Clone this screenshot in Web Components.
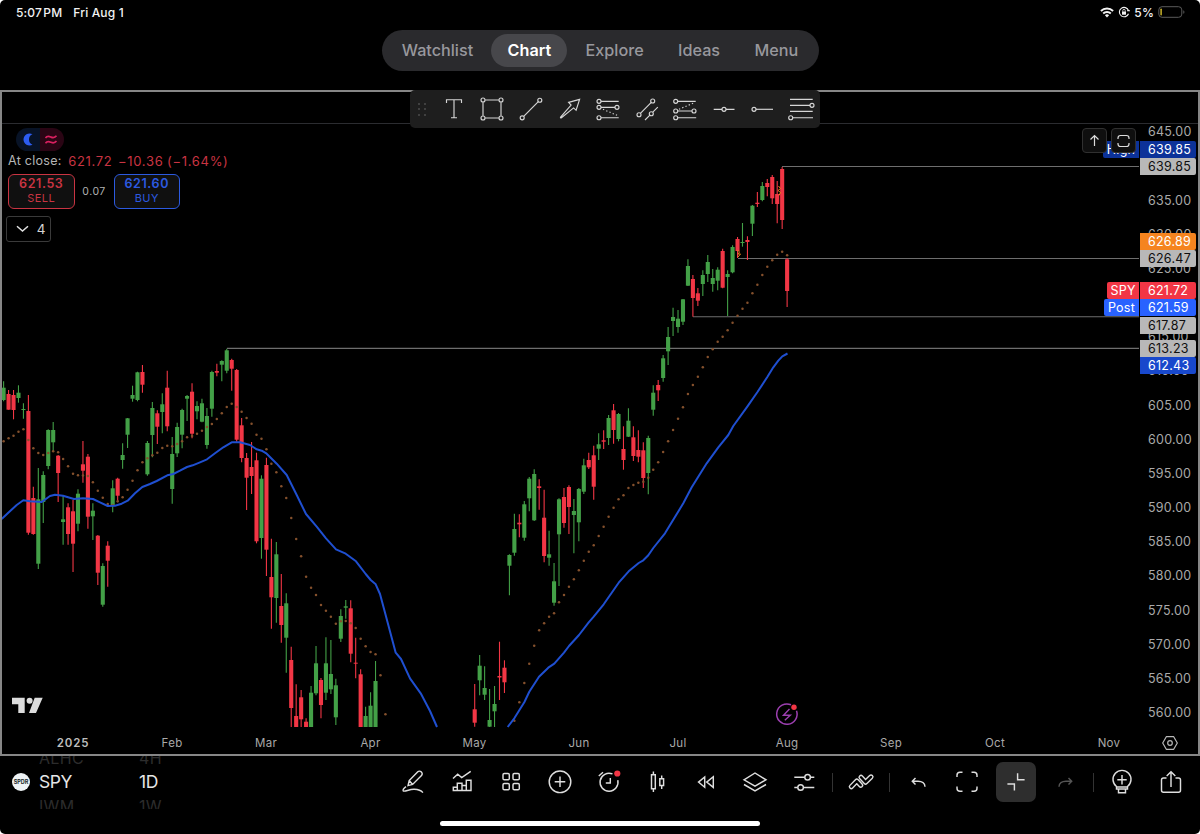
<!DOCTYPE html>
<html lang="en">
<head>
<meta charset="utf-8">
<title>SPY chart</title>
<style>
  html, body {
    margin: 0;
    background: #fff;
  }

  body {
    width: 1200px;
    height: 834px;
    overflow: hidden;
    font-family: Inter, 'Liberation Sans', sans-serif;
  }
</style>
</head>
<body>
<tablet-screen>
  <status-bar time="5:07 PM" date="Fri Aug 1" battery="5%"></status-bar>
  <nav-tabs active="Chart" items="Watchlist,Chart,Explore,Ideas,Menu"></nav-tabs>
  <chart-frame>
    <draw-toolbar slot="tools"></draw-toolbar>
    <chart-legend slot="legend" symbol-price="621.72" change="−10.36" percent="(−1.64%)"></chart-legend>
    <chart-plot></chart-plot>
    <price-axis slot="axis"></price-axis>
    <time-axis slot="time"></time-axis>
  </chart-frame>
  <bottom-bar>
    <wheel-picker slot="picker" style="--w: 100px" before="ALHC" value="SPY" after="IWM"></wheel-picker>
    <wheel-picker slot="picker" before="4H" value="1D" after="1W"></wheel-picker>
  </bottom-bar>
</tablet-screen>

<script>
const ICONS = {
  text: '<path d="M6.5 8V4.7h15V8M14 4.7v18M11 22.7h6"/>',
  rect: '<path d="M7.2 5h13.6M7.2 23h13.6M5 7.2v13.6M23 7.2v13.6"/><circle cx="5" cy="5" r="2"/><circle cx="23" cy="5" r="2"/><circle cx="5" cy="23" r="2"/><circle cx="23" cy="23" r="2"/>',
  trend: '<path d="M6.7 21.3 21.3 6.7"/><circle cx="5.2" cy="22.8" r="2"/><circle cx="22.8" cy="5.2" r="2"/>',
  arrow: '<path d="M23.6 4.4 12.6 7.4l2.5 2.7L4.6 22c-.5.7.2 1.3.8.8l12.2-9.9 2.5 2.4z"/>',
  fibA: '<path d="M7 6.3h17.7M7 12.3h14M7 22.7h17.7"/><path d="m9 14.3 14.5 6.2" stroke-dasharray="1.3 2.2"/><circle cx="5" cy="6.3" r="2"/><circle cx="5" cy="12.3" r="2"/><circle cx="23" cy="12.3" r="2"/><circle cx="5" cy="22.7" r="2"/>',
  channel: '<path d="M7.4 18.3 18.3 7.4M12 25l4.9-4.9M19.8 17.2l5-5"/><circle cx="6" cy="19.7" r="2"/><circle cx="19.7" cy="6" r="2"/><circle cx="18.3" cy="18.7" r="2"/>',
  fibB: '<path d="M6.7 6.3h18M6.7 16H21M6.7 22.7h18.5"/><path d="m8 14.2 15.5-6.5" stroke-dasharray="1.3 2.2"/><circle cx="4.7" cy="6.3" r="2"/><circle cx="4.7" cy="16" r="2"/><circle cx="23" cy="16" r="2"/><circle cx="4.7" cy="22.7" r="2"/>',
  hline: '<path d="M3.7 14.3h8.3M16 14.3h8.5"/><circle cx="14" cy="14.3" r="2"/>',
  ray: '<path d="M8 14.3h17"/><circle cx="6" cy="14.3" r="2"/>',
  levels: '<path d="M3 4.3h22.7M3 10.3h20M3 16.3h22.7M5.7 22.7H26"/><circle cx="25" cy="10.3" r="2"/><circle cx="3.7" cy="22.7" r="2"/>',
  pencil: '<path d="M9 17.6 10.2 12.6 18.8 3.8a2.3 2.3 0 0 1 3.3 0l.4.4a2.3 2.3 0 0 1 0 3.3L13.6 16.4 9 17.6zM10.2 12.6l3.4 3.8M7 18.6c-2 1.5-3.3 3.2-2.8 4.2.9 1.7 6-1.7 11-1.5 4 .2 6.5.7 8.7 3.3"/>',
  indicators: '<path d="M5 10.5 9.7 6.2l4 3.4 9-6.3M5.3 19.2h4v3.3h-4zM9.3 15.2H14v7.3H9.3zM14 17.5h4.3v5H14zM18.3 12.2H23v10.3h-4.7z"/>',
  grid: '<rect x="6" y="5.5" width="6.3" height="6.3" rx="1.3"/><rect x="16" y="5.5" width="6.3" height="6.3" rx="1.3"/><rect x="6" y="15.5" width="6.3" height="6.3" rx="1.3"/><rect x="16" y="15.5" width="6.3" height="6.3" rx="1.3"/>',
  plus: '<circle cx="14" cy="13.8" r="10.8"/><path d="M14 8.5v10.6M8.7 13.8h10.6"/>',
  alarm: '<path d="M17.5 5.9a9 9 0 1 0 5.3 6.3M3.8 8 8 4.2M15.3 10v5h-4.5"/><circle cx="22.3" cy="5.5" r="3.1" fill="#f23645" stroke="none"/>',
  candles: '<path d="M8.5 6.8h3.8v14H8.5zM10.4 3.5v3.3M10.4 20.8V24M16.8 10.8h3.8v6.7h-3.8zM18.7 7.5v3.3M18.7 17.5V21"/>',
  rewind: '<path d="M6.5 14.1 12.7 9v10.2zM14.7 14.1l6.6-5.3v10.6z"/>',
  layers: '<path d="M3 11.8 14 5l11 6.8-11 6.3zM3 16.5l11 6.3 11-6.3"/>',
  sliders: '<path d="M4.3 9.2h10.4M20.4 9.2h3.9M4.3 19.5h3.4M13.5 19.5h10.8"/><circle cx="17.6" cy="9.2" r="2.8"/><circle cx="10.6" cy="19.5" r="2.8"/>',
  pattern: '<g stroke-linejoin="round" stroke-linecap="round"><path d="M4.3 18.7 9.8 13l3.9 4.300M14 9.300l4.600 4.900L24 8.900" stroke-width="5.200"/><path d="M4.300 18.700 9.800 13l3.900 4.300M14 9.300l4.600 4.900L24 8.900" stroke="#000" stroke-width="2.400"/></g>',
  undo: '<path d="m10.5 10-3.2 3.2 3.2 3.2M7.5 13.2h5.500c4 0 7 2 7 5.500"/>',
  redo: '<path d="m17.500 10 3.200 3.200-3.200 3.200M20.500 13.200h-5.500c-4 0-7 2-7 5.500"/>',
  full: '<path d="M4 9V7.200a3 3 0 0 1 3-3h2.500M18.500 4.200H21a3 3 0 0 1 3 3V9M24 18.500v1.800a3 3 0 0 1-3 3h-2.500M9.500 23.300H7a3 3 0 0 1-3-3v-1.800"/>',
  shrink: '<path d="M15.600 5.300v6.500h7M5.400 16h7v6.500"/>',
  idea: '<path d="M8.500 18.500a9 9 0 1 1 11 0v2.500h-11zM8.500 19h11M10.500 21.200v3.500h7v-3.500M14 7v9.500M9.300 11.700h9.400"/>',
  share: '<path d="M9.500 10H6.500a2 2 0 0 0-2 2v10.200a2 2 0 0 0 2 2h15a2 2 0 0 0 2-2V12a2 2 0 0 0-2-2h-3M14 19V3.800M9.700 8 14 3.700 18.300 8"/>'
};

// Candle rows: [high, body top, body bottom, low, up]
const STEP = 4.959;
const FIRST_X = 3.6;
const CANDLES = [
  { start: 0, rows: [
    [381.3,387.7,400,401.3,1],[390,394,409.7,409.7,0],[390,395,410,419.3,0],[385.3,392.7,398,402.7,1],[403.3,409,410,418.7,1],
    [395,411,532.7,534.7,0],[486.7,498,534,534.7,0],[468,499.3,563.7,569,1],[471.3,475,502,523,1],[429.3,430,466,469.3,1],
    [422,430,442.3,451.3,1],[455,455.7,473,502,0],[495.3,519.3,522,544.7,1],[503.3,507.3,534,544.7,0],[500,511.3,543.7,572,0],
    [489.3,493.7,523.7,531.3,1],[441,464.3,470.7,482.7,0],[454,456.7,516.7,528.7,0],[503.3,510.7,516.3,540,1],[535,535.7,572.7,585,0],
    [563.3,566,604.7,606.7,1],[541.3,545.7,560.7,586.7,0],[480.3,488.3,505.7,512.3,1],[477.7,478.7,495.7,502.3,0],[443.3,455,460,468.7,1],
    [418,418.3,434.7,448,1],[385.7,395,398.7,401.7,1],[371.7,372.3,400,401.3,1],[365,372,384.7,392.7,0],[441,443,474.3,475.7,1],
    [402,408,435,457.3,1],[410.3,413.3,426.7,444,0],[393.3,404.3,412,433.3,1],[370.7,387.7,426.3,431.3,0],[437,454,489,503.7,1],
    [422.7,427,453.3,457,1],[408.7,410,434.7,448.3,1],[395,396,398.7,421,1],[383.3,391.7,433.7,438.3,0],[401.3,406,411.3,419.3,1],
    [398.7,403.3,421.7,422.3,1],[408,416,445,448.7,1],[370.7,372,408.7,416.7,1],[363.7,371,372.7,376.3,0],[360.3,361,364.7,381.3,1],
    [348.7,350.3,370.7,373.3,1],[358.7,360,368.7,390.7,0],[369,370,439.7,441.7,0],[418,425.3,458,462.3,0],[453,458,477.7,510,0],
    [442,467,476,494,0],[452.7,460.3,541.3,543.3,0],[475.3,478.7,538,558.7,1],[457.7,465,549.7,576,0],[538.7,577,597.3,628.7,0],
    [542,554.3,598,622.7,1],[574,606,625,642.7,0],[593.3,603.3,637.7,672.7,1],[646.7,660,708,727,0],[684.3,716,727,727,0],
    [690,697.3,719.3,727,0],[718.3,721.7,727,727,0],[686,692.7,727,727,1],[646,663.3,693.3,695.3,1],[678,680,705,718.3,0],
    [637.3,663.3,692.7,700,1],[640,674,689.3,694,1],[678.7,685.3,717.3,725,1],[609.3,616,638.7,642,1],[600,606.3,607.7,618.7,1],
    [600.3,608.3,653.7,662.3,0],[637.7,662.7,663.7,678.3,0],[669.3,674.3,727,727,0],[706.7,716,727,727,1],[692.3,705.7,727,727,1],
    [661,681,727,727,1]
  ] },
  { start: 95, rows: [
    [684,709.3,722.7,726.7,0],[655,665.7,680.3,695.3,1],[666.3,688,694.7,700,1],[689,720,726.7,727,1],[686,704,711.3,727,1],
    [641.7,676,677.5,700,0],[660.3,667.7,682.3,693,0],[554.3,555,565.7,595.3,1],[513.7,529,552.7,555.7,1],[514.3,522.7,524.3,537.3,0],
    [501,504.3,537.7,540.7,1],[477,478.7,498.3,511.3,1],[469.3,474,520.3,521,1],[479.3,486.3,488,509.7,0],[489.7,517.7,556,562.3,0],
    [530.7,554.3,557.7,565.7,1],[563,581.3,602.7,605.7,1],[498.3,499.3,534.3,586,1],[488,497,523,527.7,0],[485.3,487,507,534,0],
    [499,511,515,553.3,1],[488,489,522.3,541.3,1],[458.7,465.3,491.7,494,1],[452.7,460,467.3,469,0],[445.7,455.3,486.7,499.7,0],
    [433.3,444.3,448.7,460,1],[430.3,440.3,441.7,449,0],[415,418,438,445,1],[404,410.3,430,443.7,0],[413,414,439,441.3,1],
    [426.3,449,460,469.7,0],[408.3,420.7,436.7,437,1],[426.3,437.3,456,461,0],[430.3,450,456.7,462.3,0],[442.3,450.3,478,488,0],
    [435.7,438,473,494.3,1],[385.3,392.7,409.7,415.7,1],[380,385,390.3,401,0],[355,358.3,378,381.7,1],[327,337,351.3,365,1],
    [307.7,317,321,336,1],[310,318.7,327,332.7,1],[299,299.3,321.7,325,1],[259.3,266,285.7,286,1],[275,279,298,316.7,0],
    [288,293.3,300.7,306,0],[270.3,275,284,296,1],[255,262,274,282,1],[269,278,284,291.7,1],[267.3,269.7,280.7,290.3,1],
    [248.7,251,287.7,288.3,0],[270.3,274,277,316,1],[245.3,247,272.3,273.3,1],[237,239,251,258,0],[223,242,243,246.7,1],
    [236.3,240,242,260,0],[205,205.7,223.7,236,1],[192,202.7,204,207,0],[182,186,200,201.3,1],[179,183,187,196.3,0],
    [175,177,198.3,204,0],[181,194,204,223.3,0],[167,169,220,229,0],[258,259.3,291,307,0]
  ] }
];

// Short average, one dot per session
const DOTS = [
  { start: 0, ys: [441.3,438.3,435.7,431.7,429.3,440,448.3,453,455,453,451.3,452.3,459,466.3,473.7,475.3,475.5,476,482.3,490.7,497.7,504,505,501.3,497.3,489.7,480.7,470.3,462.3,458.3,455.3,452.7,448,445.7,446.3,444,441.3,437.3,436,433.7,430.7,427,424,419,413.3,407,403.7,407,411.7,418,423.7,434.7,438.7,449.3,463.7,472.3,486.3,498,518,539,556.3,576.7,587.7,595,605,610.7,616.7,623.7,621.3,621,623.3,628,638.7,646.3,652,654.3,675.3,714.3] },
  { start: 103, ys: [720.7,702.3,683,663.7,645.7,630.3,623.3,616.7,613.3,602.3,595,586.7,579.3,570.3,560.7,551.7,545.3,536,526.7,516.7,507.7,499.3,495.3,488,485,482.7,481.7,477.7,469.7,462.3,452,441.3,430,418.7,407.3,394,385,376.7,367.3,357,349.3,341.7,336.7,330.3,322.7,315.7,308.7,302.7,293.3,284.7,275,266.7,260.3,254.7,251.7,255.3] }
];

// Long average
const AVERAGE = [
  '1.7,519 8.3,512.7 16.7,505 23.3,500.3 30,501.3 41.7,502 50,496 55,494.7 63,495.7 74,499 83,498.3 93,499 100,502.3 107.7,506 115,505.7 121.7,503.7 127.7,500.7 135,493.3 142.3,487 150,484 156.7,481 167.3,475.3 173.3,474 180,470.7 187,467 192.7,465.3 200,462.3 207,459.3 215,453.3 223.3,447.3 231.7,442.3 240,442.3 250,445 256.7,449.3 261.7,450.7 266.7,453.7 276.7,463.7 286.7,475 296.7,495 306,514 316.7,526.7 326,538.3 336,549.3 345.7,553.7 356,561.3 365.7,574 370.7,580 375.7,584.3 380,594 385.3,613.7 395.7,652.7 401,659 410,678.3 420.7,693.3 430,711 437,727',
  '507.7,727 514.3,718.3 524.3,702.3 529.3,691.7 539,676.7 548.3,667.7 554.3,663.7 564,652.7 569,646 579,635 588.7,622.3 593.7,616.7 603.7,604.3 618.7,582.7 628.7,571.3 638.7,563 643.3,560.3 648.3,555.3 653.3,548 665,533.3 683.3,503.3 691.7,487.3 706.7,463.3 718.3,447.3 728.3,435 733.3,426 747.3,406.7 757.3,392.3 767.3,377 773.3,367.3 778.3,360.7 782.3,356.3 787.5,353.5'
];

const RAYS = [[782, 166.5], [738, 258.5], [693, 316.8], [227, 348.4]];

const TICKS = [645, 640, 635, 630, 625, 620, 615, 610, 605, 600, 595, 590, 585, 580, 575, 570, 565, 560];

const TAGS = [
  { y: 141, price: '639.85', bg: '#0c3299', title: 'High', w: 36 },
  { y: 158.3, price: '639.85', bg: '#b8b8b8', fg: '#0f0f0f' },
  { y: 232.5, price: '626.89', bg: '#f5841f' },
  { y: 249.8, price: '626.47', bg: '#b8b8b8', fg: '#0f0f0f' },
  { y: 282, price: '621.72', bg: '#f23645', title: 'SPY', w: 32 },
  { y: 299.3, price: '621.59', bg: '#2962ff', title: 'Post', w: 35 },
  { y: 316.6, price: '617.87', bg: '#b8b8b8', fg: '#0f0f0f' },
  { y: 339.9, price: '613.23', bg: '#b8b8b8', fg: '#0f0f0f' },
  { y: 357.2, price: '612.43', bg: '#1848cc' }
];

const MONTHS = [['2025', 73], ['Feb', 172], ['Mar', 266], ['Apr', 370.5], ['May', 474.5], ['Jun', 579], ['Jul', 678], ['Aug', 787], ['Sep', 891], ['Oct', 995], ['Nov', 1109]];

class BaseElement extends HTMLElement {
  constructor() {
    super();
    this.attachShadow({ mode: 'open' });
  }

  connectedCallback() {
    this.shadowRoot.innerHTML = this.render();
  }
}

class UiIcon extends BaseElement {
  render() {
    return `
      <style>
        :host { display: block; width: 28px; height: 28px; flex: none; }
        svg { display: block; overflow: visible; fill: none; stroke: currentColor; stroke-width: var(--stroke, 1.3); }
      </style>
      <svg width="28" height="28" viewBox="0 0 28 28">${ICONS[this.getAttribute('name')] || ''}</svg>
    `;
  }
}

class TabletScreen extends BaseElement {
  render() {
    return `
      <style>
        :host {
          display: flex;
          flex-direction: column;
          width: 1200px;
          height: 834px;
          background: #000;
          border-radius: 5px;
          overflow: hidden;
          position: relative;
        }
      </style>
      <slot></slot>
    `;
  }
}

class StatusBar extends BaseElement {
  render() {
    return `
      <style>
        :host {
          display: flex;
          align-items: center;
          height: 24px;
          flex: none;
          padding: 0 15px 0 16px;
          color: #f2f2f2;
          font-size: 12px;
          font-weight: 500;
          letter-spacing: 0.15px;
        }
        .time { word-spacing: -2px; margin-right: 11px; }
        .right { margin-left: auto; display: flex; align-items: center; gap: 4px; }
        svg { display: block; }
      </style>
      <span class="time">${this.getAttribute('time')}</span>
      <span>${this.getAttribute('date')}</span>
      <div class="right">
        <svg width="14" height="11" viewBox="0 0 14 11" fill="none" stroke="#f2f2f2" stroke-width="1.9">
          <path d="M.9 4a8.7 8.7 0 0 1 12.2 0M3.2 6.5a5.4 5.4 0 0 1 7.6 0"/>
          <path d="M7 10.5 4.9 8.3a3 3 0 0 1 4.2 0z" fill="#f2f2f2" stroke="none"/>
        </svg>
        <svg width="12" height="12" viewBox="0 0 12 12" fill="none" stroke="#f2f2f2" stroke-width="1.1">
          <path d="M10.5 4.5A4.7 4.7 0 1 0 10.5 7.7M9 4.7h3"/>
          <rect x="4" y="5.5" width="4" height="3.2" fill="#f2f2f2" stroke="none"/>
          <path d="M4.8 5.7V4.5a1.2 1.2 0 0 1 2.4 0v1.2" stroke-width=".8"/>
        </svg>
        <span>${this.getAttribute('battery')}</span>
        <svg width="27" height="12" viewBox="0 0 27 12">
          <rect x=".8" y=".7" width="23" height="10.6" rx="3.2" fill="none" stroke="#5a5a5a"/>
          <path d="M25.3 4.2v3.6c1.5-.5 1.5-3.1 0-3.6z" fill="#5a5a5a"/>
          <rect x="2.4" y="2.5" width="1.4" height="7" rx=".7" fill="#d8c02c"/>
        </svg>
      </div>
    `;
  }
}

class NavTabs extends BaseElement {
  render() {
    const active = this.getAttribute('active');
    return `
      <style>
        :host { display: flex; justify-content: center; flex: none; height: 60px; padding-top: 5.5px; box-sizing: content-box; }
        nav {
          display: flex;
          align-items: center;
          box-sizing: border-box;
          width: 437px;
          height: 41px;
          padding: 0 4px;
          border-radius: 21px;
          background: #2a2a2d;
          justify-content: space-between;
        }
        span {
          padding: 0 16.3px;
          line-height: 33px;
          border-radius: 17px;
          font-size: 16.2px;
          font-weight: 500;
          color: #98989d;
        }
        .active { background: #47474b; color: #fff; font-weight: 600; }
      </style>
      <nav>
        ${this.getAttribute('items').split(',').map(t => `<span class="${t === active ? 'active' : ''}">${t}</span>`).join('')}
      </nav>
    `;
  }
}

class DrawToolbar extends BaseElement {
  render() {
    const tools = ['text', 'rect', 'trend', 'arrow', 'fibA', 'channel', 'fibB', 'hline', 'ray', 'levels'];
    return `
      <style>
        :host {
          display: flex;
          align-items: center;
          width: 410px;
          height: 38px;
          border-radius: 5px;
          background: #1e1e1e;
          color: #d6d6d6;
          --stroke: 1.15;
        }
        .grip { width: 24.7px; display: grid; grid-template-columns: 2px 2px; gap: 3.5px 4px; justify-content: center; }
        .grip i { width: 2px; height: 2px; background: #4c4c4c; border-radius: 1px; }
        .tool { flex: 1; display: flex; justify-content: center; }
      </style>
      <div class="grip"><i></i><i></i><i></i><i></i><i></i><i></i></div>
      ${tools.map(t => `<div class="tool"><ui-icon name="${t}"></ui-icon></div>`).join('')}
    `;
  }
}

class ChartFrame extends BaseElement {
  render() {
    return `
      <style>
        :host {
          display: grid;
          grid-template: 32px 1fr 26px / 1fr 58px;
          box-sizing: border-box;
          height: 666px;
          flex: none;
          margin-top: .5px;
          border: 2px solid #868686;
          border-bottom-width: 2.5px;
          position: relative;
        }
        .head { grid-column: 1 / 3; border-bottom: 1px solid #2b2c30; box-sizing: border-box; height: 31.5px; }
        .time { grid-column: 1 / 3; }
        .axis { position: relative; }
        .tools { position: absolute; left: 408px; top: -2px; z-index: 3; }
        .legend { position: absolute; left: 4px; top: 35.5px; z-index: 2; }
        .pane { position: absolute; right: 62.5px; top: 36px; z-index: 3; display: flex; gap: 4px; }
        .pane div {
          width: 23px;
          height: 23px;
          border: 1px solid #303030;
          border-radius: 4px;
          background: #0f0f0f;
        }
        .pane svg { display: block; fill: none; stroke: #dcdcdc; stroke-width: 1.2; }
      </style>
      <div class="head"></div>
      <slot></slot>
      <div class="axis"><slot name="axis"></slot></div>
      <div class="time"><slot name="time"></slot></div>
      <div class="tools"><slot name="tools"></slot></div>
      <div class="legend"><slot name="legend"></slot></div>
      <div class="pane">
        <div><svg width="23" height="23" viewBox="0 0 23 23"><path d="M11.5 17V6.5M7.5 10.5l4-4 4 4"/></svg></div>
        <div><svg width="23" height="23" viewBox="0 0 23 23"><path d="M6 10V9a2.5 2.5 0 0 1 2.5-2.5h6A2.5 2.5 0 0 1 17 9v1M6 14v1a2.5 2.5 0 0 0 2.5 2.5h6A2.5 2.5 0 0 0 17 15v-1"/></svg></div>
      </div>
    `;
  }
}

class ChartLegend extends BaseElement {
  render() {
    return `
      <style>
        :host { display: flex; flex-direction: column; align-items: flex-start; font-size: 12.5px; letter-spacing: .45px; }
        .badges { display: flex; margin: 0 0 0 10px; border-radius: 12px; overflow: hidden; }
        .badges svg { display: block; }
        .close { display: flex; line-height: 18px; height: 18px; margin: 1px 0 0 2px; color: #b5b5b5; white-space: pre; letter-spacing: .28px; }
        .close b { font-weight: 400; color: #c93442; margin-left: 6.5px; font-size: 13px; letter-spacing: .7px; }
        .trade { display: flex; align-items: center; margin: 4px 0 0 2px; color: #b0b0b0; font-size: 10.5px; }
        .trade > span { width: 39px; text-align: center; }
        .side {
          box-sizing: border-box;
          width: 66.5px;
          height: 35px;
          padding-top: 2px;
          border: 1px solid;
          border-radius: 6px;
          background: #101010;
          font-size: 11px;
          line-height: 14px;
          text-align: center;
        }
        .side b { display: block; font-size: 12.5px; font-weight: 600; letter-spacing: .6px; line-height: 14px; }
        .sell { color: #c93442; }
        .buy { color: #2c5ae0; }
        .more {
          box-sizing: border-box;
          display: flex;
          align-items: center;
          width: 45px;
          height: 26px;
          margin-top: 7px;
          padding: 0 4px 0 9px;
          border: 1px solid #3a3a3a;
          border-radius: 3px;
          justify-content: space-between;
          color: #d4d4d4;
          font-size: 13.5px;
        }
      </style>
      <div class="badges">
        <svg width="24" height="23" viewBox="0 0 24 23"><path fill="#081326" d="M0 0h24v23H0z"/><path fill="#2c5cf0" d="M16.5 6.300A6 6 0 1 0 16.500 16.700 5.600 5.600 0 0 1 16.500 6.300z"/></svg>
        <svg width="24" height="23" viewBox="0 0 24 23"><path fill="#2a0514" d="M0 0h24v23H0z"/><path fill="none" stroke="#d8205f" stroke-width="1.7" d="M5.500 10c1.800-2.600 3.600-1.700 5.500-.9s3.700 1.100 5.500-1.300M5.500 15.200c1.800-2.600 3.600-1.700 5.500-.9s3.700 1.100 5.500-1.300"/></svg>
      </div>
      <div class="close">At close:<b>${this.getAttribute('symbol-price')}</b><b style="margin-left:5.5px">${this.getAttribute('change')}</b><b style="margin-left:3.5px">${this.getAttribute('percent')}</b></div>
      <div class="trade">
        <div class="side sell"><b>621.53</b>SELL</div>
        <span>0.07</span>
        <div class="side buy"><b>621.60</b>BUY</div>
      </div>
      <div class="more">
        <svg width="13" height="8" viewBox="0 0 13 8" fill="none" stroke="#e0e0e0" stroke-width="1.5"><path d="m1 1.2 5.5 4.800L12 1.200"/></svg>
        <span>4</span>
      </div>
    `;
  }
}

class ChartPlot extends BaseElement {
  candle(x, [high, top, bottom, low, up]) {
    const color = up ? '#43a047' : '#f23645';
    return `<path d="M${x.toFixed(2)} ${high}V${low}" stroke="${color}" stroke-width="1.1"/>` +
      `<rect x="${(x - 2.05).toFixed(2)}" y="${top}" width="4.1" height="${Math.max(bottom - top, 1).toFixed(1)}" fill="${color}"/>`;
  }

  render() {
    const at = i => FIRST_X + i * STEP;
    // user units are screen pixels, the view box starts below the pane header
    return `
      <style>
        :host { display: block; min-width: 0; min-height: 0; }
        svg { display: block; }
      </style>
      <svg width="1138" height="604" viewBox="2 124 1138 604">
        <g stroke="#6e6e6e" stroke-width="1.1">
          ${RAYS.map(([x, y]) => `<path d="M${x} ${y}H1139"/>`).join('')}
        </g>
        ${CANDLES.map(s => s.rows.map((row, i) => this.candle(at(s.start + i), row)).join('')).join('')}
        <g fill="#84502c">
          ${DOTS.map(s => s.ys.map((y, i) => `<circle cx="${at(s.start + i).toFixed(2)}" cy="${y}" r="1.25"/>`).join('')).join('')}
        </g>
        <g fill="none" stroke="#1f4fd0" stroke-width="2" stroke-linejoin="round">
          ${AVERAGE.map(p => `<polyline points="${p}"/>`).join('')}
        </g>
        <path d="M778.5 186l2 2.5-2.5 2 2.5 2-1.5 3M737.5 250l2 2-1.5 2 2.5 0-2.5 3" fill="none" stroke="#e8871e"/>
        <g fill="none" stroke="#9c3fb0" stroke-width="1.5">
          <path d="M791 704.8A10.2 10.2 0 1 0 796.5 710.7"/>
          <path d="M789.5 709l-6 6.2h6.8l-5.5 5" stroke-width="1.4"/>
        </g>
        <circle cx="794" cy="707.3" r="2.7" fill="#f23645"/>
        <path d="M12 697.7h12.7V713h-6.4v-8.7H12zM34.7 697.7h8L36 713h-7z" fill="#dcdcdc"/>
        <circle cx="29.6" cy="700.7" r="3" fill="#dcdcdc"/>
      </svg>
    `;
  }
}

class PriceAxis extends BaseElement {
  render() {
    return `
      <style>
        :host {
          display: flow-root;
          position: relative;
          font-size: 12.5px;
          letter-spacing: .25px;
          color: #a9a9a9;
        }
        ol { list-style: none; margin: -8.7px 0 0; padding: 0; }
        li { height: 34.16px; line-height: 34.16px; padding-left: 8px; }
        .tag {
          position: absolute;
          right: 2.5px;
          display: flex;
          gap: 1px;
          height: 17.2px;
          line-height: 17.6px;
          color: #fff;
        }
        .tag span { box-sizing: border-box; }
        .title { text-align: center; border-radius: 2px 0 0 2px; }
        .price { width: 55.5px; padding-left: 8px; border-radius: 0 2px 2px 0; }
      </style>
      <ol>${TICKS.map(t => `<li>${t.toFixed(2)}</li>`).join('')}</ol>
      ${TAGS.map(t => `
        <div class="tag" style="top:${(t.y - 124).toFixed(1)}px">
          ${t.title ? `<span class="title" style="background:${t.bg};width:${t.w}px">${t.title}</span>` : ''}
          <span class="price" style="background:${t.bg};color:${t.fg || '#fff'}">${t.price}</span>
        </div>`).join('')}
    `;
  }
}

class TimeAxis extends BaseElement {
  render() {
    return `
      <style>
        :host { display: block; }
        svg { display: block; }
        text { font-size: 11.5px; letter-spacing: .3px; fill: #a9a9a9; text-anchor: middle; }
        text:first-child { font-weight: 600; letter-spacing: .9px; fill: #bdbdbd; }
      </style>
      <svg width="1196" height="26" viewBox="2 728 1196 26">
        ${MONTHS.map(([name, x]) => `<text x="${x}" y="745.2">${name}</text>`).join('')}
        <g fill="none" stroke="#b8b8b8" stroke-width="1.2">
          <path d="M1166.3 734.7h7.4l3.6 6.3-3.6 6.3h-7.4l-3.6-6.300z" stroke-linejoin="round"/>
          <circle cx="1170" cy="741" r="2.3"/>
        </g>
      </svg>
    `;
  }
}

class WheelPicker extends BaseElement {
  render() {
    return `
      <style>
        :host { display: block; width: var(--w, 60px); height: 53px; overflow: hidden; font-size: 17.5px; line-height: 24px; color: #e6e6e6; }
        div { margin-top: -10px; }
        span { display: block; letter-spacing: -.4px; }
        .dim { color: #2c2c2c; font-size: 16px; letter-spacing: .3px; }
      </style>
      <div>
        <span class="dim">${this.getAttribute('before')}</span>
        <span>${this.getAttribute('value')}</span>
        <span class="dim">${this.getAttribute('after')}</span>
      </div>
    `;
  }
}

class BottomBar extends BaseElement {
  render() {
    const groups = [
      ['pencil', 'indicators', 'grid', 'plus', 'alarm', 'candles', 'rewind', 'layers', 'sliders'],
      ['pattern'],
      ['undo', 'full', 'shrink', 'redo'],
      ['idea', 'share']
    ];
    const cell = name => `<div class="cell ${name}"><ui-icon name="${name}"></ui-icon></div>`;
    return `
      <style>
        :host { display: flex; flex-direction: column; flex: 1; color: #dedede; --stroke: 1.45; }
        .row { display: flex; height: 52px; }
        .picker { display: flex; width: 389px; flex: none; }
        .logo {
          width: 18px;
          height: 18px;
          margin: 17px 9px 0 12px;
          border-radius: 9px;
          background: #eef3f5;
          color: #1d2b2b;
          font: 700 5.5px/18px Inter, sans-serif;
          letter-spacing: -.1px;
          text-align: center;
        }
        .cell { width: 48.8px; display: flex; align-items: center; justify-content: center; }
        .shrink ui-icon { padding: 6.2px; border-radius: 7px; background: #2e2e2e; }
        .redo { color: #555; }
        .sep { width: 8.6px; display: flex; align-items: center; justify-content: center; }
        .sep::before { content: ''; width: 1px; height: 19px; background: #333; }
        .home { width: 320px; height: 5.5px; margin: 12.5px auto 0; border-radius: 3px; background: #fff; }
      </style>
      <div class="row">
        <div class="picker"><div class="logo">SPDR</div><slot name="picker"></slot></div>
        ${groups.map(g => g.map(cell).join('')).join('<div class="sep"></div>')}
      </div>
      <div class="home"></div>
    `;
  }
}

customElements.define('ui-icon', UiIcon);
customElements.define('tablet-screen', TabletScreen);
customElements.define('status-bar', StatusBar);
customElements.define('nav-tabs', NavTabs);
customElements.define('draw-toolbar', DrawToolbar);
customElements.define('chart-frame', ChartFrame);
customElements.define('chart-legend', ChartLegend);
customElements.define('chart-plot', ChartPlot);
customElements.define('price-axis', PriceAxis);
customElements.define('time-axis', TimeAxis);
customElements.define('wheel-picker', WheelPicker);
customElements.define('bottom-bar', BottomBar);
</script>
</body>
</html>
